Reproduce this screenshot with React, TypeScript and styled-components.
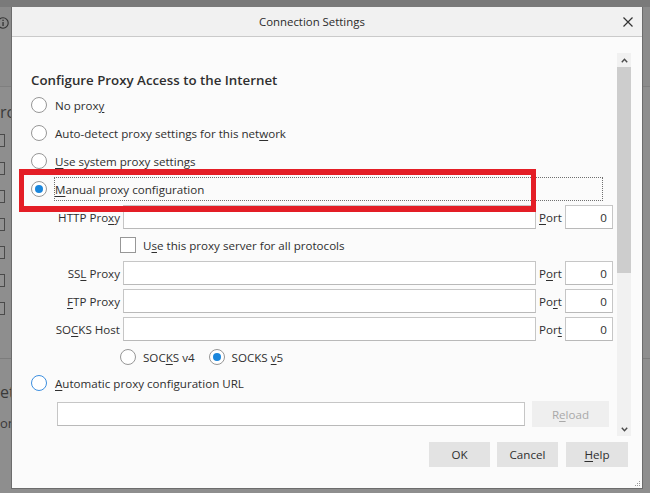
import React from "react";
import styled, { createGlobalStyle } from "styled-components";

const GlobalStyle = createGlobalStyle`
  html, body { margin: 0; padding: 0; }
  body {
    width: 650px;
    height: 493px;
    overflow: hidden;
    background: #7a7a7a;
    font-family: "Open Sans", "Noto Sans", sans-serif;
  }
  * { box-sizing: border-box; }
`;

const FONT = `"Open Sans", "Noto Sans", sans-serif`;

const Desktop = styled.div`
  position: relative;
  width: 650px;
  height: 493px;
  overflow: hidden;
  background: #7a7a7a;
`;

/* ---------- dimmed page behind the dialog ---------- */
const Backdrop = styled.div`
  margin-top: 7px;
  width: 650px;
  height: 486px;
  background: #8b8b8b;
  display: flex;
  flex-direction: column;
  font-family: ${FONT};
  color: #3a3a3a;
`;

const BackHeader = styled.div`
  height: 80px;
  display: flex;
  align-items: flex-start;
  padding-top: 9px;
  border-bottom: 1px solid #7f7f7f;
`;

const BackBody = styled.div`
  flex: 1;
  display: flex;
  flex-direction: column;
  background: #8e8e8e;
`;

const BackSelects = styled.div`
  margin-top: 13px;
  display: flex;
  flex-direction: column;
  gap: 15px;
`;

const BackSelect = styled.div`
  margin-left: -9px;
  width: 14px;
  height: 13px;
  border: 1px solid #4a4a4a;
  background: #929292;
`;

const BackRule = styled.div`
  margin-top: 43px;
  height: 1px;
  background: #7c7c7c;
`;

const BackText = styled.div<{ $size: number; $top: number }>`
  margin-top: ${(p) => p.$top}px;
  font-size: ${(p) => p.$size}px;
  line-height: 18px;
  white-space: nowrap;
`;

/* ---------- dialog window ---------- */
const Dialog = styled.div`
  position: absolute;
  left: 11px;
  top: 7px;
  width: 632px;
  height: 482px;
  border: 1px solid #6c6c6c;
  border-top: none;
  background: #fbfbfb;
  display: flex;
  flex-direction: column;
  font-family: ${FONT};
  font-size: 11.6px;
  color: #2f2f2f;
`;

const TitleBar = styled.div`
  height: 30px;
  flex: none;
  background: #f1f1f1;
  border-bottom: 1px solid #cacaca;
  display: flex;
  align-items: center;
  padding-left: 247px;
  position: relative;
`;

const Title = styled.div`
  font-size: 11.4px;
  color: #2b2b2b;
`;

const CloseButton = styled.div`
  position: absolute;
  right: 8px;
  top: 9px;
  width: 12px;
  height: 12px;
  display: flex;
`;

const Body = styled.div`
  flex: 1;
  display: flex;
  flex-direction: column;
  padding: 16px 11px 0 19px;
`;

const ScrollArea = styled.div`
  height: 383px;
  flex: none;
  display: flex;
`;

const Content = styled.div`
  flex: 1;
  display: flex;
  flex-direction: column;
`;

const Heading = styled.div`
  margin-top: 17px;
  height: 20px;
  line-height: 20px;
  font-size: 13.3px;
  font-weight: 600;
  color: #2f2f2f;
  margin-bottom: 1px;
`;

const RadioRow = styled.div`
  position: relative;
  height: 28px;
  flex: none;
  display: flex;
  align-items: center;
  gap: 7px;
`;

const RadioCircle = styled.span<{ $checked?: boolean; $focus?: boolean }>`
  width: 16px;
  height: 16px;
  flex: none;
  border-radius: 50%;
  background: #fff;
  border: 1px solid ${(p) => (p.$focus ? "#3d8fe0" : "#979797")};
  display: flex;
  align-items: center;
  justify-content: center;
  &::after {
    content: "";
    display: ${(p) => (p.$checked ? "block" : "none")};
    width: 8px;
    height: 8px;
    border-radius: 50%;
    background: #1a86dc;
  }
`;

const OptionLabel = styled.span<{ $focusRing?: boolean; $stretch?: boolean }>`
  height: 24px;
  display: flex;
  align-items: center;
  border: 1px dotted ${(p) => (p.$focusRing ? "#6f6f6f" : "transparent")};
  flex: ${(p) => (p.$stretch ? "1" : "none")};
  margin-right: ${(p) => (p.$stretch ? "14px" : "0")};
  white-space: nowrap;
`;

const Key = styled.u`
  text-decoration: underline;
  text-decoration-thickness: 1px;
  text-underline-offset: 2px;
`;

const Highlight = styled.div`
  position: absolute;
  left: -12px;
  top: -6px;
  width: 517px;
  height: 43px;
  border-style: solid;
  border-color: #e41e26;
  border-width: 6px 5px;
  pointer-events: none;
  z-index: 2;
`;

const FieldGrid = styled.div`
  margin: 2px 0 0 23px;
  display: grid;
  grid-template-columns: 66px 413px 23px 48px;
  grid-auto-rows: 24px;
  column-gap: 3px;
  row-gap: 4px;
  align-items: center;
`;

const FieldLabel = styled.span<{ $align?: "left" | "right" }>`
  text-align: ${(p) => p.$align ?? "right"};
  white-space: nowrap;
`;

const TextBox = styled.div<{ $width?: number }>`
  height: 24px;
  width: ${(p) => (p.$width ? `${p.$width}px` : "auto")};
  background: #fff;
  border: 1px solid #c6c6c6;
  border-bottom-color: #b9b9b9;
`;

const PortBox = styled(TextBox)`
  display: flex;
  align-items: center;
  justify-content: flex-end;
  padding-right: 5px;
`;

const CheckRow = styled.div`
  grid-column: 2 / 5;
  margin-left: -3px;
  display: flex;
  align-items: center;
  gap: 7px;
`;

const CheckBox = styled.span`
  width: 16px;
  height: 16px;
  flex: none;
  background: #fff;
  border: 1px solid #979797;
`;

const SocksRow = styled.div`
  margin: 4px 0 0 89px;
  height: 24px;
  display: flex;
  align-items: center;
`;

const SocksOption = styled.div`
  display: flex;
  align-items: center;
  gap: 7px;
  margin-right: 14px;
`;

const UrlRow = styled.div`
  margin: 4px 0 0 26px;
  display: flex;
  align-items: center;
  gap: 7px;
`;

const Button = styled.div<{ $disabled?: boolean; $w: number; $h?: number }>`
  width: ${(p) => p.$w}px;
  height: ${(p) => p.$h ?? 25}px;
  flex: none;
  display: flex;
  align-items: center;
  justify-content: center;
  background: ${(p) => (p.$disabled ? "#efefef" : "#e3e3e3")};
  color: ${(p) => (p.$disabled ? "#a9a9a9" : "#2f2f2f")};
  font-size: 11.6px;
`;

const Scrollbar = styled.div`
  width: 14px;
  flex: none;
  background: #f1f1f1;
  display: flex;
  flex-direction: column;
`;

const ScrollArrow = styled.div`
  height: 14px;
  flex: none;
  display: flex;
  align-items: center;
  justify-content: center;
`;

const Thumb = styled.div`
  height: 206px;
  flex: none;
  background: #cdcdcd;
`;

const ScrollSpacer = styled.div`
  flex: 1;
`;

const Footer = styled.div`
  margin-top: 6px;
  padding-right: 3px;
  display: flex;
  justify-content: flex-end;
  gap: 7px;
`;

const HelpSlot = styled.div`
  margin-left: 1px;
  display: flex;
`;

const Grip = styled.div`
  position: absolute;
  right: 1px;
  bottom: 1px;
  width: 6px;
  height: 6px;
  display: flex;
`;

type RadioOptProps = {
  checked?: boolean;
  focus?: boolean;
  children: React.ReactNode;
  ring?: boolean;
  stretch?: boolean;
  highlight?: boolean;
};

const RadioOption = ({ checked, focus, children, ring, stretch, highlight }: RadioOptProps) => (
  <RadioRow>
    <RadioCircle $checked={checked} $focus={focus} />
    <OptionLabel $focusRing={ring} $stretch={stretch}>
      {children}
    </OptionLabel>
    {highlight && <Highlight />}
  </RadioRow>
);

const Chevron = ({ up }: { up?: boolean }) => (
  <svg width="7" height="5" viewBox="0 0 7 5">
    <path
      d={up ? "M0.8 4.2 L3.5 1.3 L6.2 4.2" : "M0.8 0.8 L3.5 3.7 L6.2 0.8"}
      fill="none"
      stroke="#4a4a4a"
      strokeWidth="1.4"
    />
  </svg>
);

const fields: { label: React.ReactNode; port: React.ReactNode }[] = [
  {
    label: (
      <>
        SS<Key>L</Key> Proxy
      </>
    ),
    port: (
      <>
        P<Key>o</Key>rt
      </>
    ),
  },
  {
    label: (
      <>
        <Key>F</Key>TP Proxy
      </>
    ),
    port: (
      <>
        Po<Key>r</Key>t
      </>
    ),
  },
  {
    label: (
      <>
        SO<Key>C</Key>KS Host
      </>
    ),
    port: (
      <>
        Por<Key>t</Key>
      </>
    ),
  },
];

export default function App() {
  return (
    <>
      <GlobalStyle />
      <Desktop>
        <Backdrop>
          <BackHeader>
            <svg width="12" height="14" viewBox="0 0 12 14" style={{ marginLeft: -3 }}>
              <circle cx="6" cy="7" r="5.2" fill="none" stroke="#333" strokeWidth="1.1" />
              <rect x="5.4" y="6" width="1.3" height="4" fill="#333" />
              <rect x="5.4" y="3.7" width="1.3" height="1.3" fill="#333" />
            </svg>
          </BackHeader>
          <BackBody>
            <BackText $size={16} $top={16}>
              rch
            </BackText>
            <BackSelects>
              {Array.from({ length: 7 }).map((_, i) => (
                <BackSelect key={i} />
              ))}
            </BackSelects>
            <BackRule />
            <BackText $size={16} $top={24}>
              et
            </BackText>
            <BackText $size={13} $top={13}>
              ont
            </BackText>
          </BackBody>
        </Backdrop>

        <Dialog>
          <TitleBar>
            <Title>Connection Settings</Title>
            <CloseButton>
              <svg width="12" height="12" viewBox="0 0 12 12">
                <path d="M1.5 1.5 L10.5 10.5 M10.5 1.5 L1.5 10.5" stroke="#333" strokeWidth="1.2" />
              </svg>
            </CloseButton>
          </TitleBar>

          <Body>
            <ScrollArea>
              <Content>
                <Heading>Configure Proxy Access to the Internet</Heading>
                <RadioOption>
                  No prox<Key>y</Key>
                </RadioOption>
                <RadioOption>
                  Auto-detect proxy settings for this net<Key>w</Key>ork
                </RadioOption>
                <RadioOption>
                  <Key>U</Key>se system proxy settings
                </RadioOption>
                <RadioOption checked ring stretch highlight>
                  <Key>M</Key>anual proxy configuration
                </RadioOption>

                <FieldGrid>
                  <FieldLabel>
                    HTTP Pro<Key>x</Key>y
                  </FieldLabel>
                  <TextBox />
                  <FieldLabel $align="left">
                    <Key>P</Key>ort
                  </FieldLabel>
                  <PortBox>0</PortBox>

                  <span />
                  <CheckRow>
                    <CheckBox />
                    <span>
                      U<Key>s</Key>e this proxy server for all protocols
                    </span>
                  </CheckRow>

                  {fields.map((f, i) => (
                    <React.Fragment key={i}>
                      <FieldLabel>{f.label}</FieldLabel>
                      <TextBox />
                      <FieldLabel $align="left">{f.port}</FieldLabel>
                      <PortBox>0</PortBox>
                    </React.Fragment>
                  ))}
                </FieldGrid>

                <SocksRow>
                  <SocksOption>
                    <RadioCircle />
                    <span>
                      SOC<Key>K</Key>S v4
                    </span>
                  </SocksOption>
                  <SocksOption>
                    <RadioCircle $checked />
                    <span>
                      SOCKS <Key>v</Key>5
                    </span>
                  </SocksOption>
                </SocksRow>

                <RadioOption focus>
                  <Key>A</Key>utomatic proxy configuration URL
                </RadioOption>

                <UrlRow>
                  <TextBox $width={468} />
                  <Button $disabled $w={77} $h={26}>
                    R<Key>e</Key>load
                  </Button>
                </UrlRow>
              </Content>

              <Scrollbar>
                <ScrollArrow>
                  <Chevron up />
                </ScrollArrow>
                <Thumb />
                <ScrollSpacer />
                <ScrollArrow>
                  <Chevron />
                </ScrollArrow>
              </Scrollbar>
            </ScrollArea>

            <Footer>
              <Button $w={61}>OK</Button>
              <Button $w={61}>Cancel</Button>
              <HelpSlot>
                <Button $w={62}>
                  <Key>H</Key>elp
                </Button>
              </HelpSlot>
            </Footer>
          </Body>

          <Grip>
            <svg width="6" height="6" viewBox="0 0 6 6">
              <rect x="4" y="0" width="1" height="1" fill="#9a9a9a" />
              <rect x="2" y="2" width="1" height="1" fill="#9a9a9a" />
              <rect x="4" y="2" width="1" height="1" fill="#9a9a9a" />
              <rect x="0" y="4" width="1" height="1" fill="#9a9a9a" />
              <rect x="2" y="4" width="1" height="1" fill="#9a9a9a" />
              <rect x="4" y="4" width="1" height="1" fill="#9a9a9a" />
            </svg>
          </Grip>
        </Dialog>
      </Desktop>
    </>
  );
}
